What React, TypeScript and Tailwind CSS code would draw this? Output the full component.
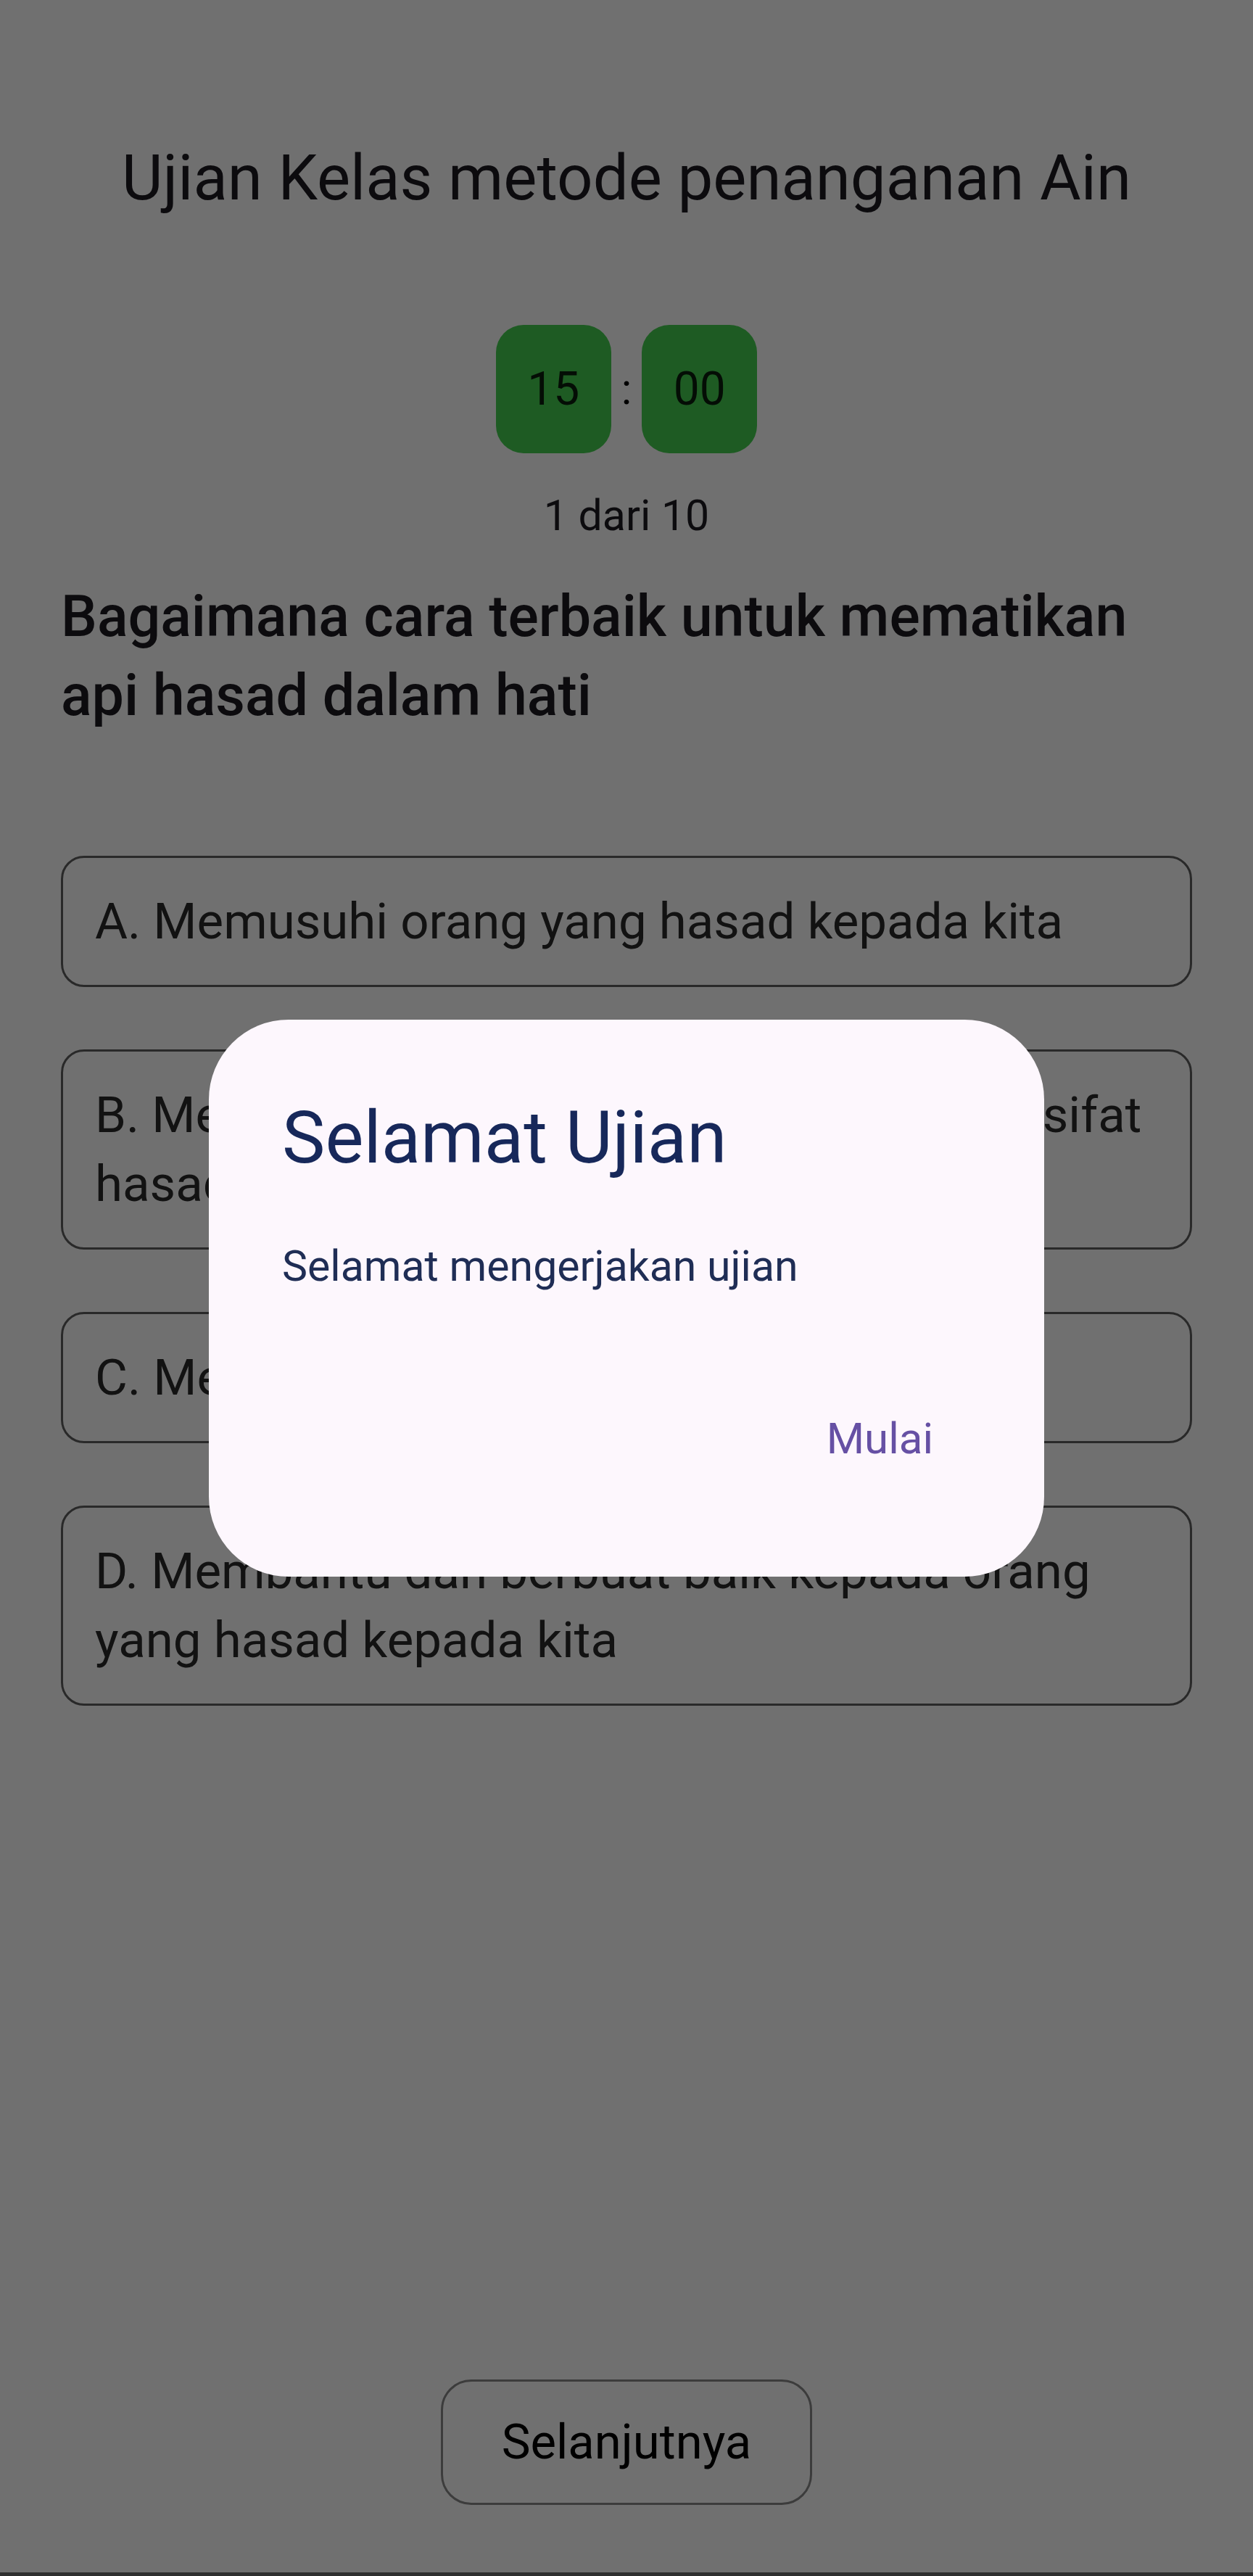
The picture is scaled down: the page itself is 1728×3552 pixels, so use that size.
const options = [
  "A. Memusuhi orang yang hasad kepada kita",
  "B. Menghindari orang-orang yang memiliki sifat hasad",
  "C. Membalas perbuatan orang yang hasad",
  "D. Membantu dan berbuat baik kepada orang yang hasad kepada kita",
];

const TimerBox = ({ value }: { value: string }) => (
  <div className="w-[159px] h-[177px] rounded-[38px] bg-[#45cf50] flex items-center justify-center text-[64px] text-[#0a1f0c]">
    {value}
  </div>
);

const App = () => {
  return (
    <div
      className="relative w-full h-[3552px] bg-white overflow-hidden"
      style={{ fontFamily: "Roboto, 'Noto Sans', sans-serif" }}
    >
      {/* halaman ujian */}
      <div className="h-full flex flex-col">
        <h1 className="mt-[190px] text-center text-[87px] leading-[110px] text-[#1d1b20]">
          Ujian Kelas metode penanganan Ain
        </h1>

        <div className="mt-[148px] flex items-center justify-center">
          <TimerBox value="15" />
          <span className="mx-[14px] text-[60px] text-black">:</span>
          <TimerBox value="00" />
        </div>

        <p className="mt-[46px] text-center text-[59px] leading-[80px] text-[#1d1b20]">
          1 dari 10
        </p>

        <p className="mt-[45px] px-[84px] text-[79px] leading-[109px] font-medium text-[#1d1b20]">
          Bagaimana cara terbaik untuk mematikan api hasad dalam hati
        </p>

        <div className="mt-[166px] px-[84px] flex flex-col gap-[86px]">
          {options.map((o) => (
            <div
              key={o}
              className="border-[3px] border-[#5e5e5e] rounded-[32px] px-[44px] py-[40px] text-[69px] leading-[95px] text-[#2a2a2a]"
            >
              {o}
            </div>
          ))}
        </div>

        <div className="flex-1" />

        <div className="flex justify-center">
          <button className="w-[512px] h-[173px] border-[3px] border-[#888888] rounded-[42px] text-[67px] text-black">
            Selanjutnya
          </button>
        </div>

        <div className="mt-[93px] h-[5px] bg-[#6b6b6b]" />
      </div>

      {/* dialog */}
      <div className="absolute inset-0 bg-black/[0.56] flex justify-center pt-[1406px]">
        <div className="w-[1152px] h-[768px] rounded-[110px] bg-[#fdf7fd] px-[101px] pt-[96px] flex flex-col">
          <h2 className="text-[100px] leading-[134px] text-[#17285a]">
            Selamat Ujian
          </h2>
          <p className="mt-[68px] text-[59px] leading-[84px] text-[#1f2d55]">
            Selamat mengerjakan ujian
          </p>
          <div className="mt-[112px] flex justify-end">
            <button className="h-[168px] px-[52px] text-[60px] text-[#6650a4]">
              Mulai
            </button>
          </div>
        </div>
      </div>
    </div>
  );
};

export default App;
